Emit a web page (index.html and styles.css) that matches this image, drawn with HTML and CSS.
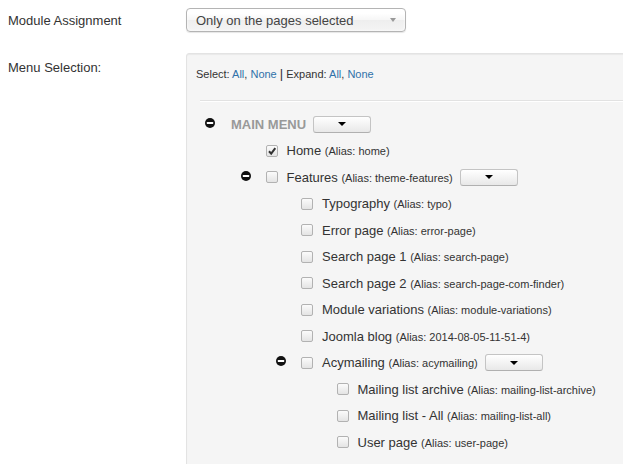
FILE: index.html
```html
<!DOCTYPE html>
<html>
<head>
<meta charset="utf-8">
<title>Module Assignment</title>
<link rel="stylesheet" href="styles.css">
</head>
<body>
<div class="form">
  <div class="control-group cg-assign">
    <div class="control-label">Module Assignment</div>
    <div class="controls">
      <div class="chzn-single"><span class="chzn-text">Only on the pages selected</span><b class="chzn-arrow"></b></div>
    </div>
  </div>

  <div class="control-group cg-menu">
    <div class="control-label label-menu">Menu Selection:</div>
    <div class="well">
      <div class="toolbar">Select: <a>All</a>, <a>None</a> <span class="sep">|</span> Expand: <a>All</a>, <a>None</a></div>
      <hr class="hr-condensed">
      <ul class="tree">
        <li>
          <div class="item">
            <span class="toggle"><svg viewBox="0 0 10 10" width="10" height="10"><circle cx="5" cy="5" r="5" fill="#111"/><rect x="1.8" y="4" width="6.4" height="2" rx="0.6" fill="#fff"/></svg></span>
            <span class="menu-title">Main Menu</span>
            <span class="dd-btn"><span class="caret"></span></span>
          </div>
          <ul>
            <li>
              <div class="item">
                <span class="toggle"></span>
                <span class="cb checked"><svg viewBox="0 0 12 12" width="12" height="12"><path d="M3 6.2 L5.2 8.6 L9.3 3.2" fill="none" stroke="#333" stroke-width="2"/></svg></span>
                <span class="lbl">Home <small>(Alias: home)</small></span>
              </div>
            </li>
            <li>
              <div class="item">
                <span class="toggle"><svg viewBox="0 0 10 10" width="10" height="10"><circle cx="5" cy="5" r="5" fill="#111"/><rect x="1.8" y="4" width="6.4" height="2" rx="0.6" fill="#fff"/></svg></span>
                <span class="cb"></span>
                <span class="lbl">Features <small>(Alias: theme-features)</small></span>
                <span class="dd-btn"><span class="caret"></span></span>
              </div>
              <ul>
                <li><div class="item"><span class="toggle"></span><span class="cb"></span><span class="lbl">Typography <small>(Alias: typo)</small></span></div></li>
                <li><div class="item"><span class="toggle"></span><span class="cb"></span><span class="lbl">Error page <small>(Alias: error-page)</small></span></div></li>
                <li><div class="item"><span class="toggle"></span><span class="cb"></span><span class="lbl">Search page 1 <small>(Alias: search-page)</small></span></div></li>
                <li><div class="item"><span class="toggle"></span><span class="cb"></span><span class="lbl">Search page 2 <small>(Alias: search-page-com-finder)</small></span></div></li>
                <li><div class="item"><span class="toggle"></span><span class="cb"></span><span class="lbl">Module variations <small>(Alias: module-variations)</small></span></div></li>
                <li><div class="item"><span class="toggle"></span><span class="cb"></span><span class="lbl">Joomla blog <small>(Alias: 2014-08-05-11-51-4)</small></span></div></li>
                <li>
                  <div class="item">
                    <span class="toggle"><svg viewBox="0 0 10 10" width="10" height="10"><circle cx="5" cy="5" r="5" fill="#111"/><rect x="1.8" y="4" width="6.4" height="2" rx="0.6" fill="#fff"/></svg></span>
                    <span class="cb"></span>
                    <span class="lbl">Acymailing <small>(Alias: acymailing)</small></span>
                    <span class="dd-btn"><span class="caret"></span></span>
                  </div>
                  <ul>
                    <li><div class="item"><span class="toggle"></span><span class="cb"></span><span class="lbl">Mailing list archive <small>(Alias: mailing-list-archive)</small></span></div></li>
                    <li><div class="item"><span class="toggle"></span><span class="cb"></span><span class="lbl">Mailing list - All <small>(Alias: mailing-list-all)</small></span></div></li>
                    <li><div class="item"><span class="toggle"></span><span class="cb"></span><span class="lbl">User page <small>(Alias: user-page)</small></span></div></li>
                  </ul>
                </li>
              </ul>
            </li>
          </ul>
        </li>
      </ul>
    </div>
  </div>
</div>
</body>
</html>
```

FILE: styles.css
```css
html {
  overflow: hidden;
  background: #fff;
}
body {
  margin: 8px;
  width: 700px;
  font-family: "Liberation Sans", Arial, sans-serif;
  font-size: 13px;
  color: #333;
}
.form {
  display: flex;
  flex-direction: column;
  gap: 20px;
}
.control-group {
  display: flex;
  align-items: flex-start;
}
.control-label {
  flex: 0 0 178px;
  line-height: 24px;
  padding-top: 1px;
  color: #333;
}
.label-menu {
  padding-top: 6px;
  line-height: 18px;
}
.chzn-single {
  height: 22px;
  width: 200px;
  border: 1px solid #b4b4b4;
  border-radius: 4px;
  background: linear-gradient(#ffffff 20%, #f6f6f6 50%, #eeeeee 52%, #f4f4f4 100%);
  box-shadow: inset 0 0 3px #fff, 0 1px 1px rgba(0,0,0,0.1);
  display: flex;
  align-items: center;
  justify-content: space-between;
  padding: 0 9px;
}
.chzn-text {
  color: #444;
}
.chzn-arrow {
  width: 0;
  height: 0;
  border-left: 3.5px solid transparent;
  border-right: 3.5px solid transparent;
  border-top: 4px solid #999;
  margin-top: -1px;
}
.well {
  flex: 1 1 auto;
  min-height: 430px;
  background: #f5f5f5;
  border: 1px solid #e3e3e3;
  border-radius: 3px;
  box-shadow: inset 0 1px 1px rgba(0,0,0,0.05);
  padding: 11px 9px 9px;
}
.toolbar {
  font-size: 11px;
  line-height: 18px;
  color: #333;
}
.toolbar a {
  color: #3071a9;
}
.toolbar .sep {
  font-size: 13px;
  color: #333;
}
.hr-condensed {
  margin: 17px 0 0 4px;
  border: 0;
  border-top: 1px solid #e2e2e2;
  border-bottom: 1px solid #fff;
  height: 0;
}
.tree, .tree ul {
  list-style: none;
  margin: 0;
  padding: 0;
}
.tree {
  padding: 9px 0 0 9px;
}
.tree ul {
  padding-left: 35.5px;
}
.item {
  display: flex;
  align-items: center;
  height: 26.5px;
  white-space: nowrap;
}
.toggle {
  flex: 0 0 10px;
  width: 10px;
  height: 10px;
  margin-right: 15px;
  margin-bottom: 3px;
  display: flex;
}
.menu-title {
  margin-left: 1px;
  font-weight: bold;
  text-transform: uppercase;
  color: #999;
}
.cb {
  flex: 0 0 12px;
  box-sizing: border-box;
  width: 12px;
  height: 12px;
  border: 1px solid #b2b2b2;
  border-radius: 2px;
  background: linear-gradient(#fbfbfb, #e4e4e4);
  margin-right: 9px;
  display: flex;
  align-items: center;
  justify-content: center;
  overflow: hidden;
}
.cb svg {
  flex: 0 0 12px;
}
.lbl {
  color: #333;
}
.lbl small {
  font-size: 11px;
}
.dd-btn {
  width: 56px;
  height: 15px;
  margin-left: 7px;
  border: 1px solid #c4c4c4;
  border-bottom-color: #b0b0b0;
  border-radius: 3px;
  background: linear-gradient(#ffffff, #e8e8e8);
  display: flex;
  align-items: center;
  justify-content: center;
}
.caret {
  width: 0;
  height: 0;
  border-left: 4px solid transparent;
  border-right: 4px solid transparent;
  border-top: 4px solid #000;
}
```
